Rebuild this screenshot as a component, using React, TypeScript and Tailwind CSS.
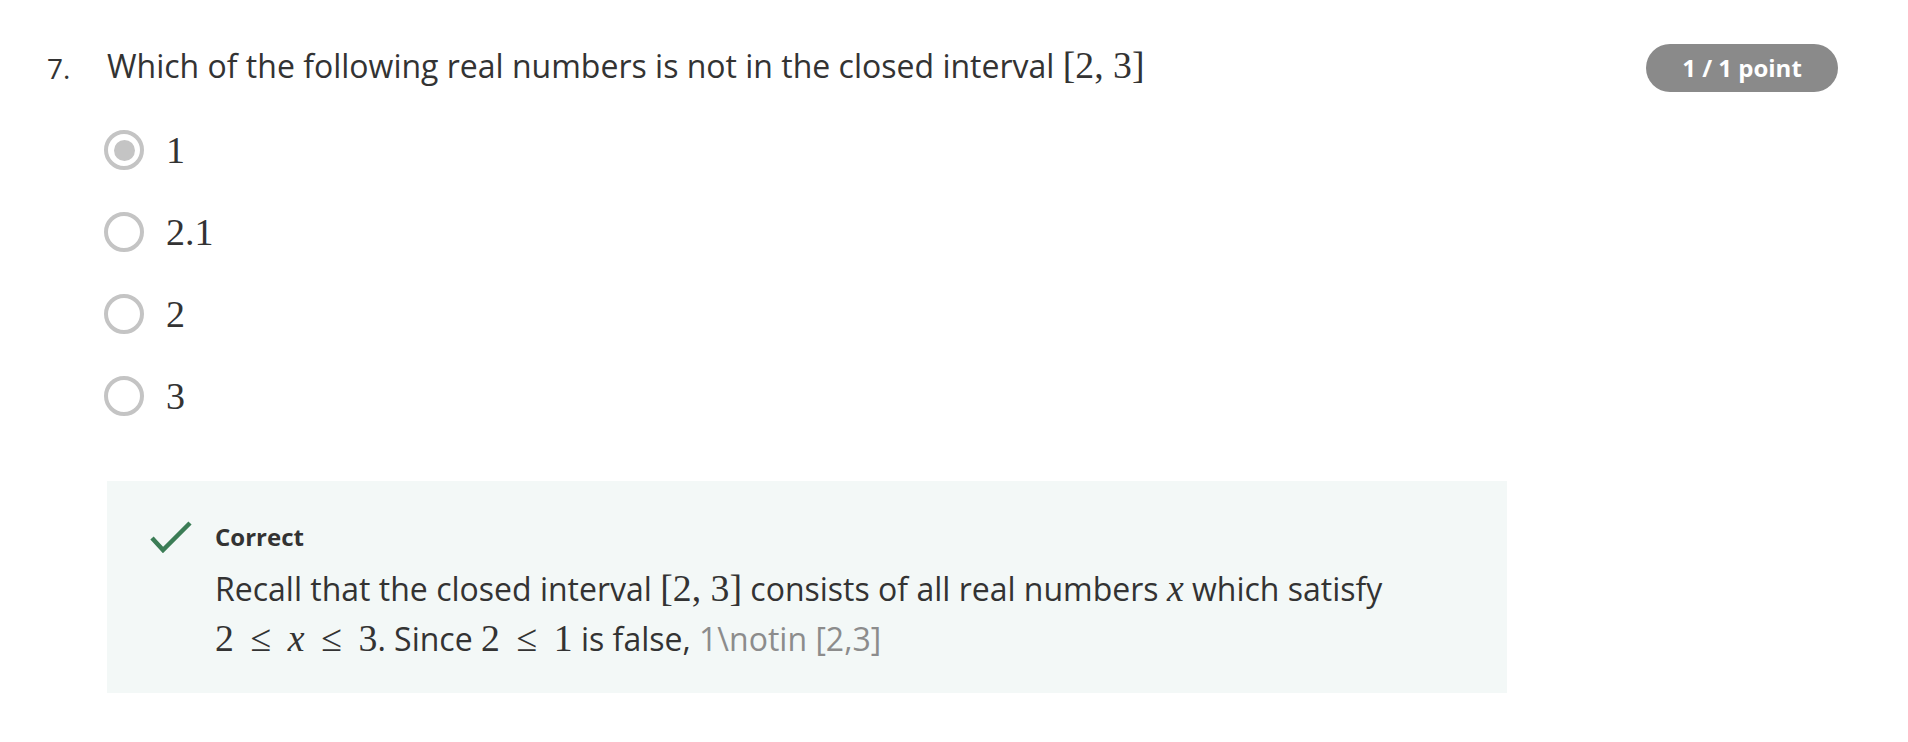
import React from 'react'

const sans = "font-['Open_Sans',sans-serif]"
const serif = "font-['Liberation_Serif',serif]"

function M({ children }: { children: React.ReactNode }) {
  return <span className={`${serif} whitespace-nowrap text-[1.18em] leading-none`}>{children}</span>
}

function Le() {
  return <span className="mx-[0.44em]">≤</span>
}

function Radio({ checked }: { checked?: boolean }) {
  return (
    <span className="flex h-[40px] w-[40px] shrink-0 items-center justify-center rounded-full border-[4px] border-[#c4c4c4]">
      {checked && <span className="h-[21px] w-[21px] rounded-full bg-[#c4c4c4]" />}
    </span>
  )
}

const options = ['1', '2.1', '2', '3']

export default function App() {
  return (
    <div className={`${sans} min-h-screen bg-white text-[#333333]`}>
      <div className="flex items-start pl-[47px] pr-[70px] pt-[44px]">
        <div className="w-[60px] pt-[2px] text-[28px] leading-[44px]">7.</div>
        <div className="flex-1">
          <div className="flex items-start justify-between">
            <p className="text-[32px] leading-[44px]">
              Which of the following real numbers is not in the closed interval <M>[2, 3]</M>
            </p>
            <span className="flex h-[48px] w-[192px] items-center justify-center rounded-full bg-[#8a8a8a] text-[24px] font-bold text-white">
              1 / 1 point
            </span>
          </div>

          <div className="-ml-[3px] mt-[17px] flex flex-col">
            {options.map((o, i) => (
              <label key={o} className="flex h-[82px] items-center gap-[22px]">
                <Radio checked={i === 0} />
                <span className={`${serif} text-[38px] leading-none`}>{o}</span>
              </label>
            ))}
          </div>

          <div className="mt-[44px] w-[1400px] bg-[#f3f8f7] pb-[29px] pl-[43px] pr-[80px] pt-[38px]">
            <div className="flex items-center">
              <svg width="42" height="32" viewBox="0 0 42 32" className="shrink-0">
                <path d="M2 17 L13 29 L40 2" fill="none" stroke="#3b7d56" strokeWidth="4.5" />
              </svg>
              <span className="ml-[23px] text-[24px] font-bold text-[#333333]">Correct</span>
            </div>
            <p className="mt-[9px] pl-[65px] text-[32px] leading-[50px]">
              Recall that the closed interval <M>[2, 3]</M> consists of all real numbers <M><i>x</i></M> which satisfy{' '}
              <M>2<Le /><i>x</i><Le />3</M>. Since <M>2<Le />1</M> is false, <span className="text-[#8c8c8c]">1\notin [2,3]</span>
            </p>
          </div>
        </div>
      </div>
    </div>
  )
}
